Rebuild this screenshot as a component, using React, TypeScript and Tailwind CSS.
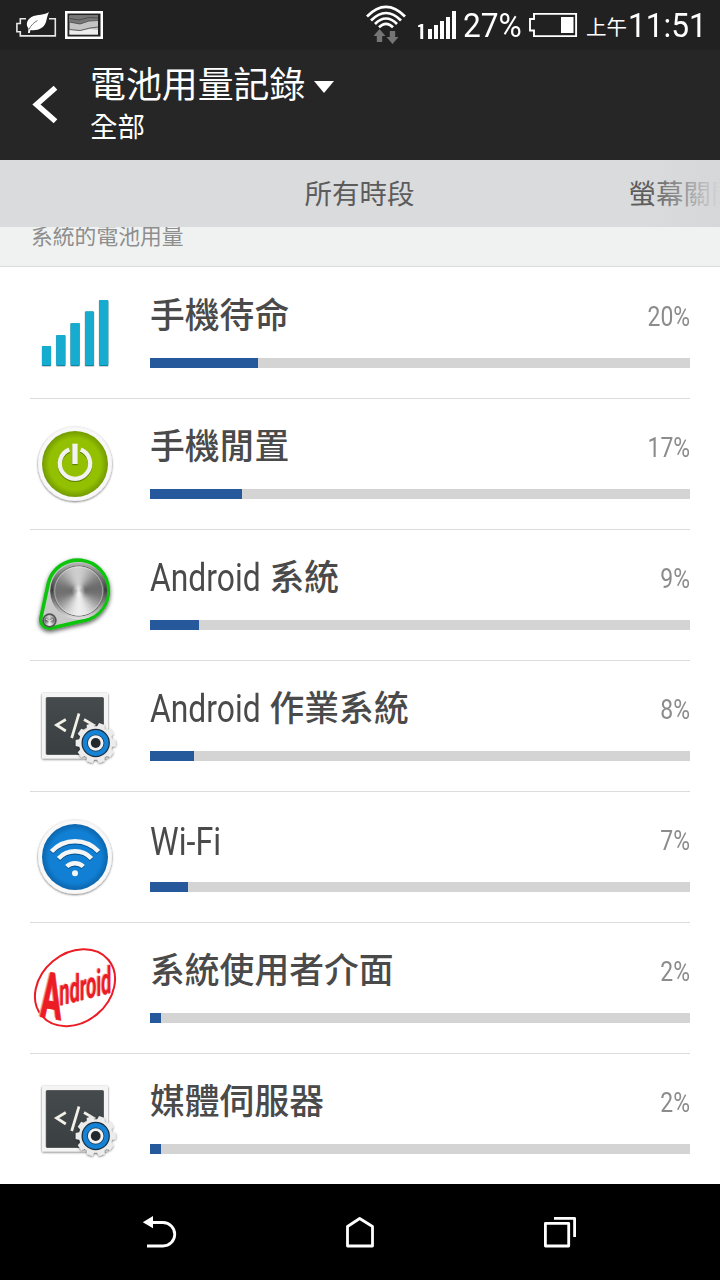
import type { ReactNode } from "react";
import { clsx } from "clsx";

const FONT = "font-['Roboto','Noto_Sans_CJK_TC',sans-serif]";

function LeafBattery() {
  return (
    <svg width="44" height="30" viewBox="14 8 44 30" fill="none">
      <path d="M26 16.700H20.300V21.500H16.900V29.800H20.300V33.900H55.300V16.700H49" stroke="#e6e6e6" strokeWidth="1.600" />
      <path d="M49 10C45 13.500 37 12 31.500 15C26.500 18 25.500 23 28.500 26.500L28 31L29.800 31L30.500 28C38 29 44 26 46 20C47 16 47.500 13 49 10Z" fill="#fff" />
      <path d="M29 27.500C31 23 34 20.500 37.500 18.500" stroke="#777" strokeWidth="1" />
    </svg>
  );
}

function PhotoIcon() {
  return (
    <svg width="38" height="28" viewBox="65 11 38 28">
      <rect x="66.200" y="12.200" width="35.600" height="25.600" fill="#222" stroke="#fff" strokeWidth="2.600" />
      <rect x="69.500" y="15.500" width="28.500" height="19" fill="#c4c4c4" />
      <path d="M69.500 15.500H98V20L88 21L80 24L69.500 22Z" fill="#777" />
      <path d="M69.500 30L80 31L90 29L98 30V34.500H69.500Z" fill="#eee" />
      <path d="M69.500 18.500L79 20L89 17.500L98 18M69.500 22L80 24L89 21L98 20.500M69.500 29.500L80 30.500L90 28L98 27" fill="none" stroke="#444" strokeWidth=".8" />
    </svg>
  );
}

function WifiStatus() {
  return (
    <svg width="40" height="40" viewBox="366 5 40 40" fill="none">
      <g stroke="#fff" strokeWidth="2.700">
        <path d="M367 16.500Q386 -2.500 405 16.500" />
        <path d="M371 20.500Q386 5.500 401 20.500" />
        <path d="M375 24Q386 13 397 24" />
        <path d="M379 27.300Q386 20.500 393 27.300" />
      </g>
      <path d="M379.500 29L385.500 36H382.200V42H376.800V36H373.500ZM392.500 44L398.500 37H395.200V31H389.800V37H386.500Z" fill="#757575" />
    </svg>
  );
}

function SignalStatus() {
  return (
    <svg width="39" height="30" viewBox="418 10 39 30" fill="#fff">
      <path d="M418 25.500L421 24H423.200V39H420.300V27H418Z" />
      <path d="M428 29H432V39H428ZM434 25H438V39H434ZM440 21H444V39H440ZM446 17H450V39H446ZM452 11H456V39H452Z" />
    </svg>
  );
}

function BatteryStatus() {
  return (
    <svg width="49" height="26" viewBox="529 12 49 26">
      <path d="M534 13.900H576.100V36.100H534V30.500H530V19H534Z" fill="none" stroke="#fff" strokeWidth="1.900" />
      <rect x="561" y="17" width="12.500" height="16" fill="#fff" />
    </svg>
  );
}

function StatusBar() {
  return (
    <div className="flex h-[50px] items-center bg-[#212121] pl-[14px] text-white">
      <LeafBattery />
      <div className="ml-[7px]"><PhotoIcon /></div>
      <div className="ml-auto flex h-full w-[354px] items-center">
        <WifiStatus />
        <div className="ml-3"><SignalStatus /></div>
        <span className="ml-[6px] w-[66px] origin-left scale-x-[.96] pt-[2px] text-[33px] leading-[48px] whitespace-nowrap">27%</span>
        <BatteryStatus />
        <span className="ml-[8px] w-[42px] pt-[7px] text-[20.5px] leading-[43px] whitespace-nowrap">上午</span>
        <span className="origin-left scale-x-[.96] pt-px text-[33px] leading-[49px] whitespace-nowrap">11:51</span>
      </div>
    </div>
  );
}

function Header() {
  return (
    <header className="flex h-[110px] bg-[#262626] text-white">
      <svg className="mt-9 ml-[30px] shrink-0" width="30" height="38" viewBox="30 86 30 38" fill="none">
        <path d="M55.500 87.800L36.500 104.500L55.500 121.200" stroke="#fff" strokeWidth="5.500" />
      </svg>
      <div className="ml-[30px]">
        <div className="flex h-[66px] items-center">
          <h1 className="pt-[5px] text-[35.9px] leading-[66px] font-normal">電池用量記錄</h1>
          <svg className="mt-[7px] ml-[9px]" width="20" height="12" viewBox="0 0 20 12">
            <path d="M0 0H20L10 12Z" fill="#fff" />
          </svg>
        </div>
        <p className="-mt-[8px] text-[27.5px] leading-[40px]">全部</p>
      </div>
    </header>
  );
}

function Tabs() {
  return (
    <div className="relative flex h-[67px] overflow-hidden bg-[#dadbdd] pt-[2px] text-[27.5px] leading-[66px] text-[#5c5c5c]">
      <span className="ml-[304.5px] shrink-0">所有時段</span>
      <span className="ml-[214px] shrink-0">螢幕關閉</span>
      <div className="absolute top-0 right-0 h-full w-[72px] bg-linear-to-r from-[#d8d9db]/0 to-[#d6d7d9]" />
    </div>
  );
}

function SignalIcon() {
  const bars = [[12, 78], [26.300, 67], [40.600, 55], [55, 43.500], [69.200, 32]];
  return (
    <>
      {bars.map(([x, y]) => (
        <g key={x}>
          <rect x={x - 0.5} y={y} width="10" height={99 - y} rx="1.500" fill="#000" opacity=".18" />
          <rect x={x} y={y} width="9" height={98 - y} rx="1" fill="#0b86a4" />
          <rect x={x} y={y} width="9" height={97 - y} rx="1" fill="#16acd0" />
        </g>
      ))}
    </>
  );
}

function Disc({ id, inner, edge, children }: { id: string; inner: string; edge: string; children: ReactNode }) {
  return (
    <>
      <defs>
        <radialGradient id={id}>
          <stop offset=".78" stopColor={inner} />
          <stop offset="1" stopColor={edge} />
        </radialGradient>
        <filter id={`${id}-shadow`} x="-20%" y="-20%" width="140%" height="140%">
          <feDropShadow dx="0" dy=".8" stdDeviation="1" floodOpacity=".6" />
        </filter>
      </defs>
      <circle cx="45" cy="65" r="37" fill="#f8f8f8" filter={`url(#${id}-shadow)`} />
      <circle cx="45" cy="65" r="33" fill={`url(#${id})`} />
      {children}
    </>
  );
}

function PowerIcon() {
  const glyph = "M39.300 50.500A15.200 15.200 0 1 0 50.700 50.500";
  return (
    <Disc id="power" inner="#93c000" edge="#729a00">
      <g fill="none" stroke="#608400" strokeWidth="4.200" transform="translate(0 1.200)">
        <path d={glyph} />
        <path d="M45 45V65" strokeWidth="5.400" />
      </g>
      <g fill="none" stroke="#f2f2f2" strokeWidth="4.200">
        <path d={glyph} />
        <path d="M45 44.700V65" strokeWidth="5.400" />
      </g>
    </Disc>
  );
}

function WifiIcon() {
  const arcs = "M21.500 59.500A32 32 0 0 1 68.500 59.500M28.500 66.500A22.500 22.500 0 0 1 61.500 66.500M36.700 74.500A12 12 0 0 1 53.300 74.500";
  return (
    <Disc id="wifi" inner="#1180d4" edge="#0b65ac">
      <path d={arcs} fill="none" stroke="#07508c" strokeWidth="4.500" transform="translate(0 1)" />
      <path d={arcs} fill="none" stroke="#f5f5f5" strokeWidth="4.500" />
      <circle cx="45" cy="81.300" r="3" fill="#f5f5f5" />
    </Disc>
  );
}

// brushed metal: wedges whose grey follows the angle, each overlapping the next to hide seams
function Metal({ cx, cy, r }: { cx: number; cy: number; r: number }) {
  return (
    <>
      {Array.from({ length: 48 }, (_, i) => {
        const a = (i * Math.PI) / 24;
        const b = a + (i === 47 ? Math.PI / 24 : Math.PI / 12);
        const grey = Math.round(166 - 56 * Math.cos(2 * (a + 0.12)) + 16 * Math.sin(a));
        return (
          <path
            key={i}
            d={`M${cx} ${cy}L${cx + r * Math.cos(a)} ${cy + r * Math.sin(a)}L${cx + r * Math.cos(b)} ${cy + r * Math.sin(b)}Z`}
            fill={`rgb(${grey},${grey},${grey})`}
          />
        );
      })}
    </>
  );
}

function KnobIcon() {
  return (
    <>
      <defs>
        <linearGradient id="rim" x1="0" y1="0" x2="0" y2="1">
          <stop offset="0" stopColor="#b5b5b5" />
          <stop offset=".48" stopColor="#3d3d3d" />
          <stop offset="1" stopColor="#e4e4e4" />
        </linearGradient>
        <radialGradient id="glint">
          <stop offset="0" stopColor="#fff" stopOpacity=".8" />
          <stop offset="1" stopColor="#fff" stopOpacity="0" />
        </radialGradient>
        <filter id="knob-shadow" x="-20%" y="-20%" width="140%" height="140%">
          <feDropShadow dx="0" dy="2" stdDeviation="2" floodOpacity=".65" />
        </filter>
      </defs>
      <path
        d="M18.500 52.500A30.500 30.500 0 1 1 54 90.500L21.500 98A8.800 8.800 0 0 1 10.800 88Z"
        fill="#c9c9c9" stroke="#0cc410" strokeWidth="3.600" filter="url(#knob-shadow)"
      />
      <circle cx="48.700" cy="61" r="28.500" fill="url(#rim)" />
      <circle cx="48.700" cy="61" r="25.500" fill="#6a6a6a" />
      <Metal cx={48.7} cy={61} r={24.7} />
      <circle cx="48.700" cy="61" r="7" fill="url(#glint)" />
      <circle cx="48.700" cy="61" r="24" fill="none" stroke="#eee" strokeOpacity=".4" />
      <circle cx="19.500" cy="90.500" r="7.200" fill="#555" />
      <circle cx="19.500" cy="90.500" r="5.500" fill="#aaa" />
      <Metal cx={19.5} cy={90.5} r={5} />
      <path d="M16 89L19 91L23 89.500" stroke="#fff" fill="none" opacity=".8" />
    </>
  );
}

function SystemIcon({ id }: { id: string }) {
  return (
    <>
      <defs>
        <filter id={`${id}-shadow`} x="-20%" y="-20%" width="140%" height="140%">
          <feDropShadow dx="0" dy=".8" stdDeviation="1" floodOpacity=".6" />
        </filter>
        <linearGradient id={`${id}-screen`} x1="0" y1="0" x2="0" y2="1">
          <stop offset="0" stopColor="#454a4d" />
          <stop offset="1" stopColor="#3a3f42" />
        </linearGradient>
      </defs>
      <rect x="12" y="32" width="66" height="65.500" rx="1" fill="#f4f4f4" filter={`url(#${id}-shadow)`} />
      <rect x="16.200" y="36.500" width="57.300" height="57" rx="1" fill={`url(#${id}-screen)`} stroke="#2b2f31" strokeWidth=".6" />
      <path d="M35.800 58.500L26.500 64L35.800 70M49 52.500L41.700 77M54 58.500L63.500 64L54 70" fill="none" stroke="#f1f1e8" strokeWidth="2.700" />
      <g filter={`url(#${id}-shadow)`}>
        {[0, 36, 72, 108, 144, 180, 216, 252, 288, 324].map((deg) => (
          <path key={deg} d="M61.500 68L62.700 62H68.700L69.900 68Z" fill="#ececec" transform={`rotate(${deg + 18} 65.700 82)`} />
        ))}
        <circle cx="65.700" cy="82" r="16.800" fill="#ececec" />
      </g>
      <circle cx="65.700" cy="82" r="14.200" fill="#1d2c38" />
      <circle cx="65.700" cy="82" r="13" fill="#1482d5" />
      <circle cx="65.700" cy="82" r="8.600" fill="#17374f" />
      <circle cx="65.700" cy="82" r="7.800" fill="#f2f2f2" />
      <circle cx="65.700" cy="82" r="4.900" fill="#24282b" />
    </>
  );
}

function AndroidBadge() {
  return (
    <g fill="#ec1c24" fontFamily="Roboto" fontWeight="700">
      <ellipse cx="45" cy="64.700" rx="43.500" ry="34.500" transform="rotate(-40 45 64.700)" fill="none" stroke="#ec1c24" strokeWidth="2" />
      <text fontSize="62" textLength="21" lengthAdjust="spacingAndGlyphs" transform="matrix(1 .1 -.05 1 8.500 93)" fill="#f5a3a6">A</text>
      <text fontSize="64" textLength="21" lengthAdjust="spacingAndGlyphs" transform="matrix(1 .18 -.05 1 10 93.500)" stroke="#ec1c24" strokeWidth="1">A</text>
      <text fontSize="38" textLength="52" lengthAdjust="spacingAndGlyphs" transform="matrix(1 -.25 0 1 28.500 82.500)" fill="#f5a3a6">ndroid</text>
      <text fontSize="38" textLength="52" lengthAdjust="spacingAndGlyphs" transform="matrix(1 -.25 0 1 29.500 83)">ndroid</text>
    </g>
  );
}

type Usage = { name: string; latin?: string; percent: number; bar: number; icon: ReactNode };

const usages: Usage[] = [
  { name: "手機待命", percent: 20, bar: 108, icon: <SignalIcon /> },
  { name: "手機閒置", percent: 17, bar: 92, icon: <PowerIcon /> },
  { latin: "Android", name: "系統", percent: 9, bar: 49, icon: <KnobIcon /> },
  { latin: "Android", name: "作業系統", percent: 8, bar: 44, icon: <SystemIcon id="os" /> },
  { latin: "Wi-Fi", name: "", percent: 7, bar: 38, icon: <WifiIcon /> },
  { name: "系統使用者介面", percent: 2, bar: 11, icon: <AndroidBadge /> },
  { name: "媒體伺服器", percent: 2, bar: 11, icon: <SystemIcon id="media" /> },
];

function UsageRow({ usage, first }: { usage: Usage; first: boolean }) {
  return (
    <li className={clsx("mx-[30px] flex h-[131px] border-t", first ? "border-transparent" : "border-[#dcdcdc]")}>
      <svg className="shrink-0" width="90" height="130" viewBox="0 0 90 130">{usage.icon}</svg>
      <div className="ml-[30px] flex-1">
        <div className="flex h-[90px] justify-between">
          <div className="flex text-[34.8px] leading-[97px] whitespace-nowrap text-[#4a4a4a]">
            {usage.latin && (
              <span
                className={clsx(
                  "w-[119.5px] origin-left text-[38px]",
                  usage.name ? "scale-x-[.838] leading-[96px]" : "scale-x-[.85] leading-[101px]",
                )}
              >
                {usage.latin}
              </span>
            )}
            <span className="font-medium">{usage.name}</span>
          </div>
          <span className="origin-right scale-x-[.85] text-[27px] leading-[99px] text-[#8c8c8c]">{usage.percent}%</span>
        </div>
        <div className="h-[10px] bg-[#d4d4d4]">
          <div className="h-full bg-[#25599c]" style={{ width: usage.bar }} />
        </div>
      </div>
    </li>
  );
}

function NavBar() {
  return (
    <nav className="flex h-24 items-center justify-around bg-black px-[60px]">
      <svg width="40" height="40" viewBox="140 1212 40 40" fill="none" stroke="#fff" strokeWidth="2.800">
        <path d="M152 1222.500H163A11.750 11.750 0 0 1 163 1246H147" />
        <path d="M142.800 1222.300L153 1216V1228.300Z" fill="#fff" stroke="none" />
      </svg>
      <svg width="40" height="40" viewBox="340 1212 40 40" fill="none" stroke="#fff" strokeWidth="2.800" strokeLinejoin="round">
        <path d="M347.500 1246V1226.500L359.700 1218.500L372.500 1226.500V1246Z" />
      </svg>
      <svg width="40" height="40" viewBox="540 1212 40 40" fill="none" stroke="#fff" strokeWidth="2.800" strokeLinejoin="round">
        <rect x="545.400" y="1223.400" width="23.300" height="22.600" />
        <path d="M554 1218.400H574.600V1237" />
      </svg>
    </nav>
  );
}

export default function App() {
  return (
    <div lang="zh-Hant" className={clsx("flex h-[1280px] w-[720px] flex-col overflow-hidden bg-white", FONT)}>
      <StatusBar />
      <Header />
      <Tabs />
      <div className="h-10 overflow-hidden border-b border-[#d9dcda] bg-[#f0f2f1] pl-[31px] text-[21.8px] text-[#8e8e8e]">
        <p className="-mt-[6px] leading-[32px]">系統的電池用量</p>
      </div>
      <ul>
        {usages.map((usage, i) => (
          <UsageRow key={usage.latin ? usage.latin + usage.name : usage.name} usage={usage} first={i === 0} />
        ))}
      </ul>
      <NavBar />
    </div>
  );
}
